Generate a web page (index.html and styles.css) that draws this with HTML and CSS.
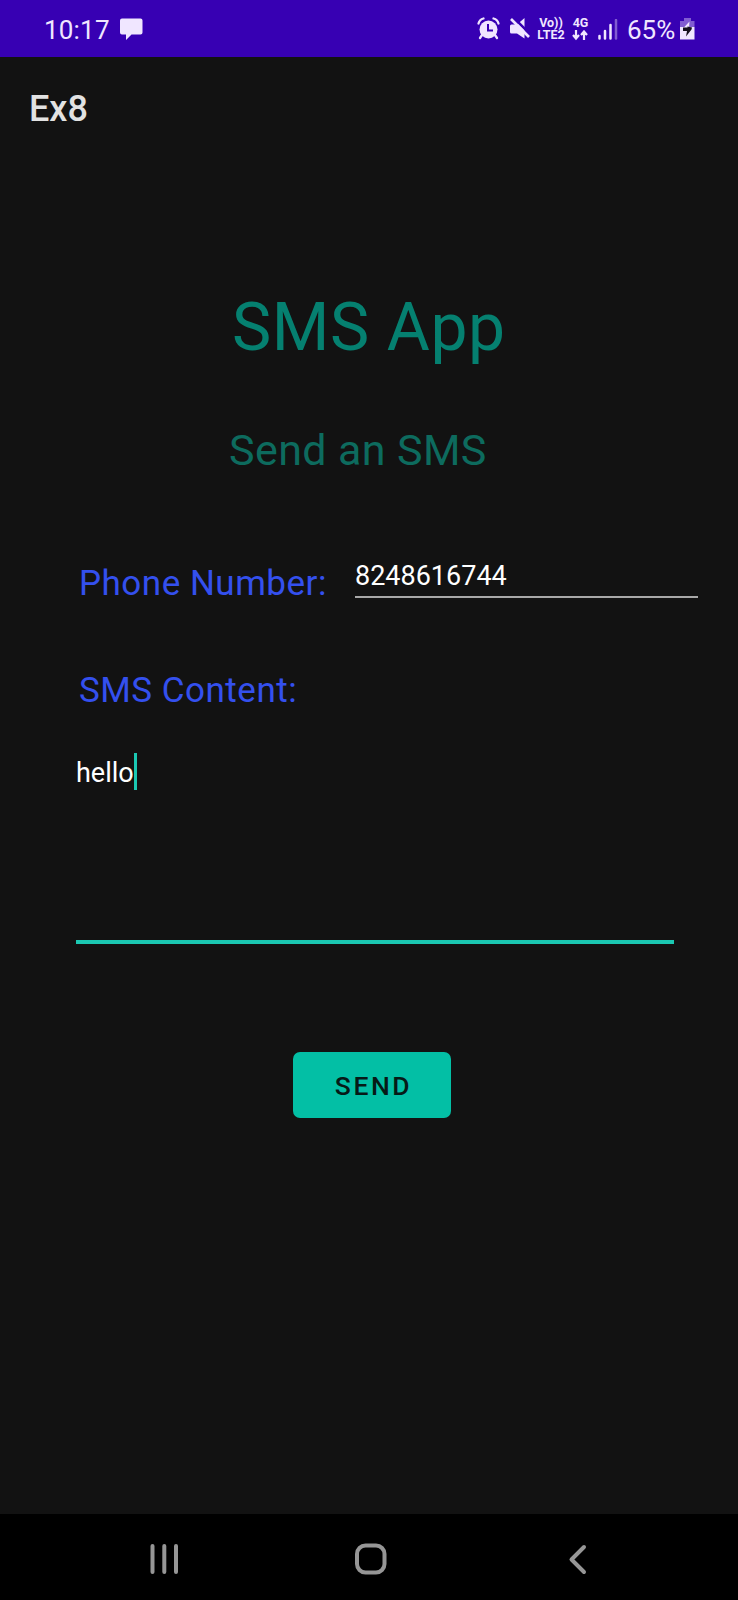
FILE: index.html
```html
<!DOCTYPE html>
<html lang="en">
<head>
<meta charset="utf-8">
<title>Ex8</title>
<link rel="stylesheet" href="styles.css">
</head>
<body>
<div class="screen">
  <header class="status">
    <span class="clock">10:17</span>
    <svg class="chat" width="24" height="24" viewBox="0 0 24 24"><path d="M2 0.500h18.500a2 2 0 0 1 2 2v12a2 2 0 0 1-2 2H11.500L6 22v-5.500H2a2 2 0 0 1-2-2v-12a2 2 0 0 1 2-2z"/></svg>
    <span class="spacer"></span>
    <svg class="alarm" width="24" height="24" viewBox="0 0 24 24">
      <circle cx="11.500" cy="12.500" r="9"/><path d="M5 18l-2 3M18 18l2 3M1.500 6.500Q2.500 2.500 6.500 1.500M16.500 1.500Q20.500 2.500 21.500 6.500" class="limb"/><path d="M11 7v6.500h5" class="hand"/>
    </svg>
    <svg class="mute" width="22" height="24" viewBox="0 0 22 24">
      <path d="M15.500 1v20.500L8 16.500H2.500a1.500 1.500 0 0 1-1.500-1.500V9A1.500 1.500 0 0 1 2.500 7.500h5.500z"/><path class="gap" d="M4 0l18 18"/><path class="slash" d="M2 2l18 18"/>
    </svg>
    <span class="tag volte"><span>Vo))</span><span>LTE2</span></span>
    <span class="tag data"><span>4G</span>
      <svg width="17" height="11" viewBox="0 0 17 11"><path d="M4 0v8M1 5l3 3.500 3-3.500M12 10V2M9 5l3-3.500 3 3.500"/></svg>
    </span>
    <svg class="signal" width="20" height="22" viewBox="0 0 20 22"><path d="M1.500 17v2.500M7 12v7.500M12.500 6v13.500"/><path class="dim" d="M18 1v18.500"/></svg>
    <span class="percent">65%</span>
    <svg class="battery" width="15" height="23" viewBox="0 0 15 23"><path class="dim" d="M4 0h7v3h3.500v6H0V3h4z"/><path d="M0 9h14.500v12.500H0z"/><path class="tip" d="M9.500 3.500L3 10.500h6z"/><path class="bolt" d="M3 9.500h4.500V8.500L12 9.500 11.500 11.500 6 18.500 7 13H3z"/></svg>
  </header>

  <h1 class="appbar">Ex8</h1>

  <main class="content">
    <h2 class="title">SMS App</h2>
    <p class="subtitle">Send an SMS</p>
    <div class="row">
      <span class="label phone-label">Phone Number:</span>
      <div class="field phone">8248616744</div>
    </div>
    <span class="label content-label">SMS Content:</span>
    <div class="field message"><span>hello</span><i class="caret"></i></div>
    <button class="send">SEND</button>
  </main>

  <nav class="nav">
    <svg width="738" height="86" viewBox="0 0 738 86"><path d="M152.500 32v26M164.300 32v26M176 32v26"/><rect x="357" y="31.500" width="27.500" height="27" rx="8.500"/><path d="M584 33L571.500 45.500 584 58"/></svg>
  </nav>
</div>
</body>
</html>
```
FILE: styles.css
```css
body { margin: 0; background: #121212; font-family: Roboto, sans-serif; }
.screen { width: 738px; height: 1600px; display: flex; flex-direction: column; background: #121212; }
.status { box-sizing: border-box; height: 57px; padding: 0 43px 0 44px; display: flex; align-items: flex-start; background: #3700b3; color: #f0e6ff; fill: #f0e6ff; }
.clock, .percent { font-size: 26px; line-height: 30px; margin-top: 15px; }
.clock { width: 66px; letter-spacing: 0.2px; }
.chat { margin: 18px 0 0 10px; }
.spacer { flex: 1; }
.alarm { margin: 17px 0 0; }
.limb { fill: none; stroke: #f0e6ff; stroke-width: 2.3; stroke-linecap: round; }
.hand { fill: none; stroke: #3700b3; stroke-width: 2; }
.mute { margin: 17px 0 0 8px; }
.gap { stroke: #3700b3; stroke-width: 2.5; }
.slash { stroke: #f0e6ff; stroke-width: 2.6; }
.tag { display: flex; flex-direction: column; align-items: center; margin-top: 17px; font-size: 12.5px; line-height: 12px; font-weight: 700; }
.volte { width: 28px; margin-left: 6px; }
.data { width: 17px; margin-left: 7px; }
.data svg { fill: none; stroke: #f0e6ff; stroke-width: 2.2; margin-top: 1px; }
.signal { margin: 19px 0 0 9px; fill: none; stroke: #f0e6ff; stroke-width: 2.5; stroke-linecap: round; }
.dim { opacity: .4; }
.percent { width: 49px; margin-left: 9px; }
.battery { margin: 18px 0 0 4px; }
.bolt { fill: #15101c; }
.appbar { box-sizing: border-box; height: 100px; margin: 0; padding: 31px 0 0 29px; font-size: 36px; line-height: 42px; font-weight: 500; color: #e2e2e2; }
.content { flex: 1; display: flex; flex-direction: column; align-items: flex-start; }
.title { margin: 132px 0 0 232px; font-size: 66px; line-height: 78px; font-weight: 400; letter-spacing: 0.6px; color: #058070; }
.subtitle { margin: 58px 0 0 229px; font-size: 43px; line-height: 50px; letter-spacing: 0.4px; color: #0d6b5e; }
.row { display: flex; align-items: flex-start; margin: 85px 0 0 79px; }
.label { font-size: 35px; line-height: 42px; letter-spacing: 0.5px; color: #3450ee; white-space: nowrap; }
.phone-label { width: 276px; margin-top: 3px; }
.field { box-sizing: border-box; font-size: 27px; line-height: 32px; color: #fff; }
.phone { width: 343px; height: 38px; border-bottom: 2px solid #a8a8a8; }
.content-label { margin: 65px 0 0 79px; }
.message { display: flex; align-items: flex-start; width: 598px; height: 191px; margin: 41px 0 0 76px; border-bottom: 4px solid #1bc8b2; }
.message span { margin-top: 4px; }
.caret { width: 3px; height: 37px; background: #1bc8b2; }
.send { width: 158px; height: 66px; margin: 108px 0 0 293px; padding: 2px 0 0 3px; border: 0; border-radius: 7px; background: #03bfa5; color: #061a17; font: 500 26.5px/30px Roboto, sans-serif; letter-spacing: 2.6px; }
.nav { height: 86px; background: #000; }
.nav svg { display: block; fill: none; stroke: #969696; stroke-width: 4; stroke-linecap: round; stroke-linejoin: round; }
```
